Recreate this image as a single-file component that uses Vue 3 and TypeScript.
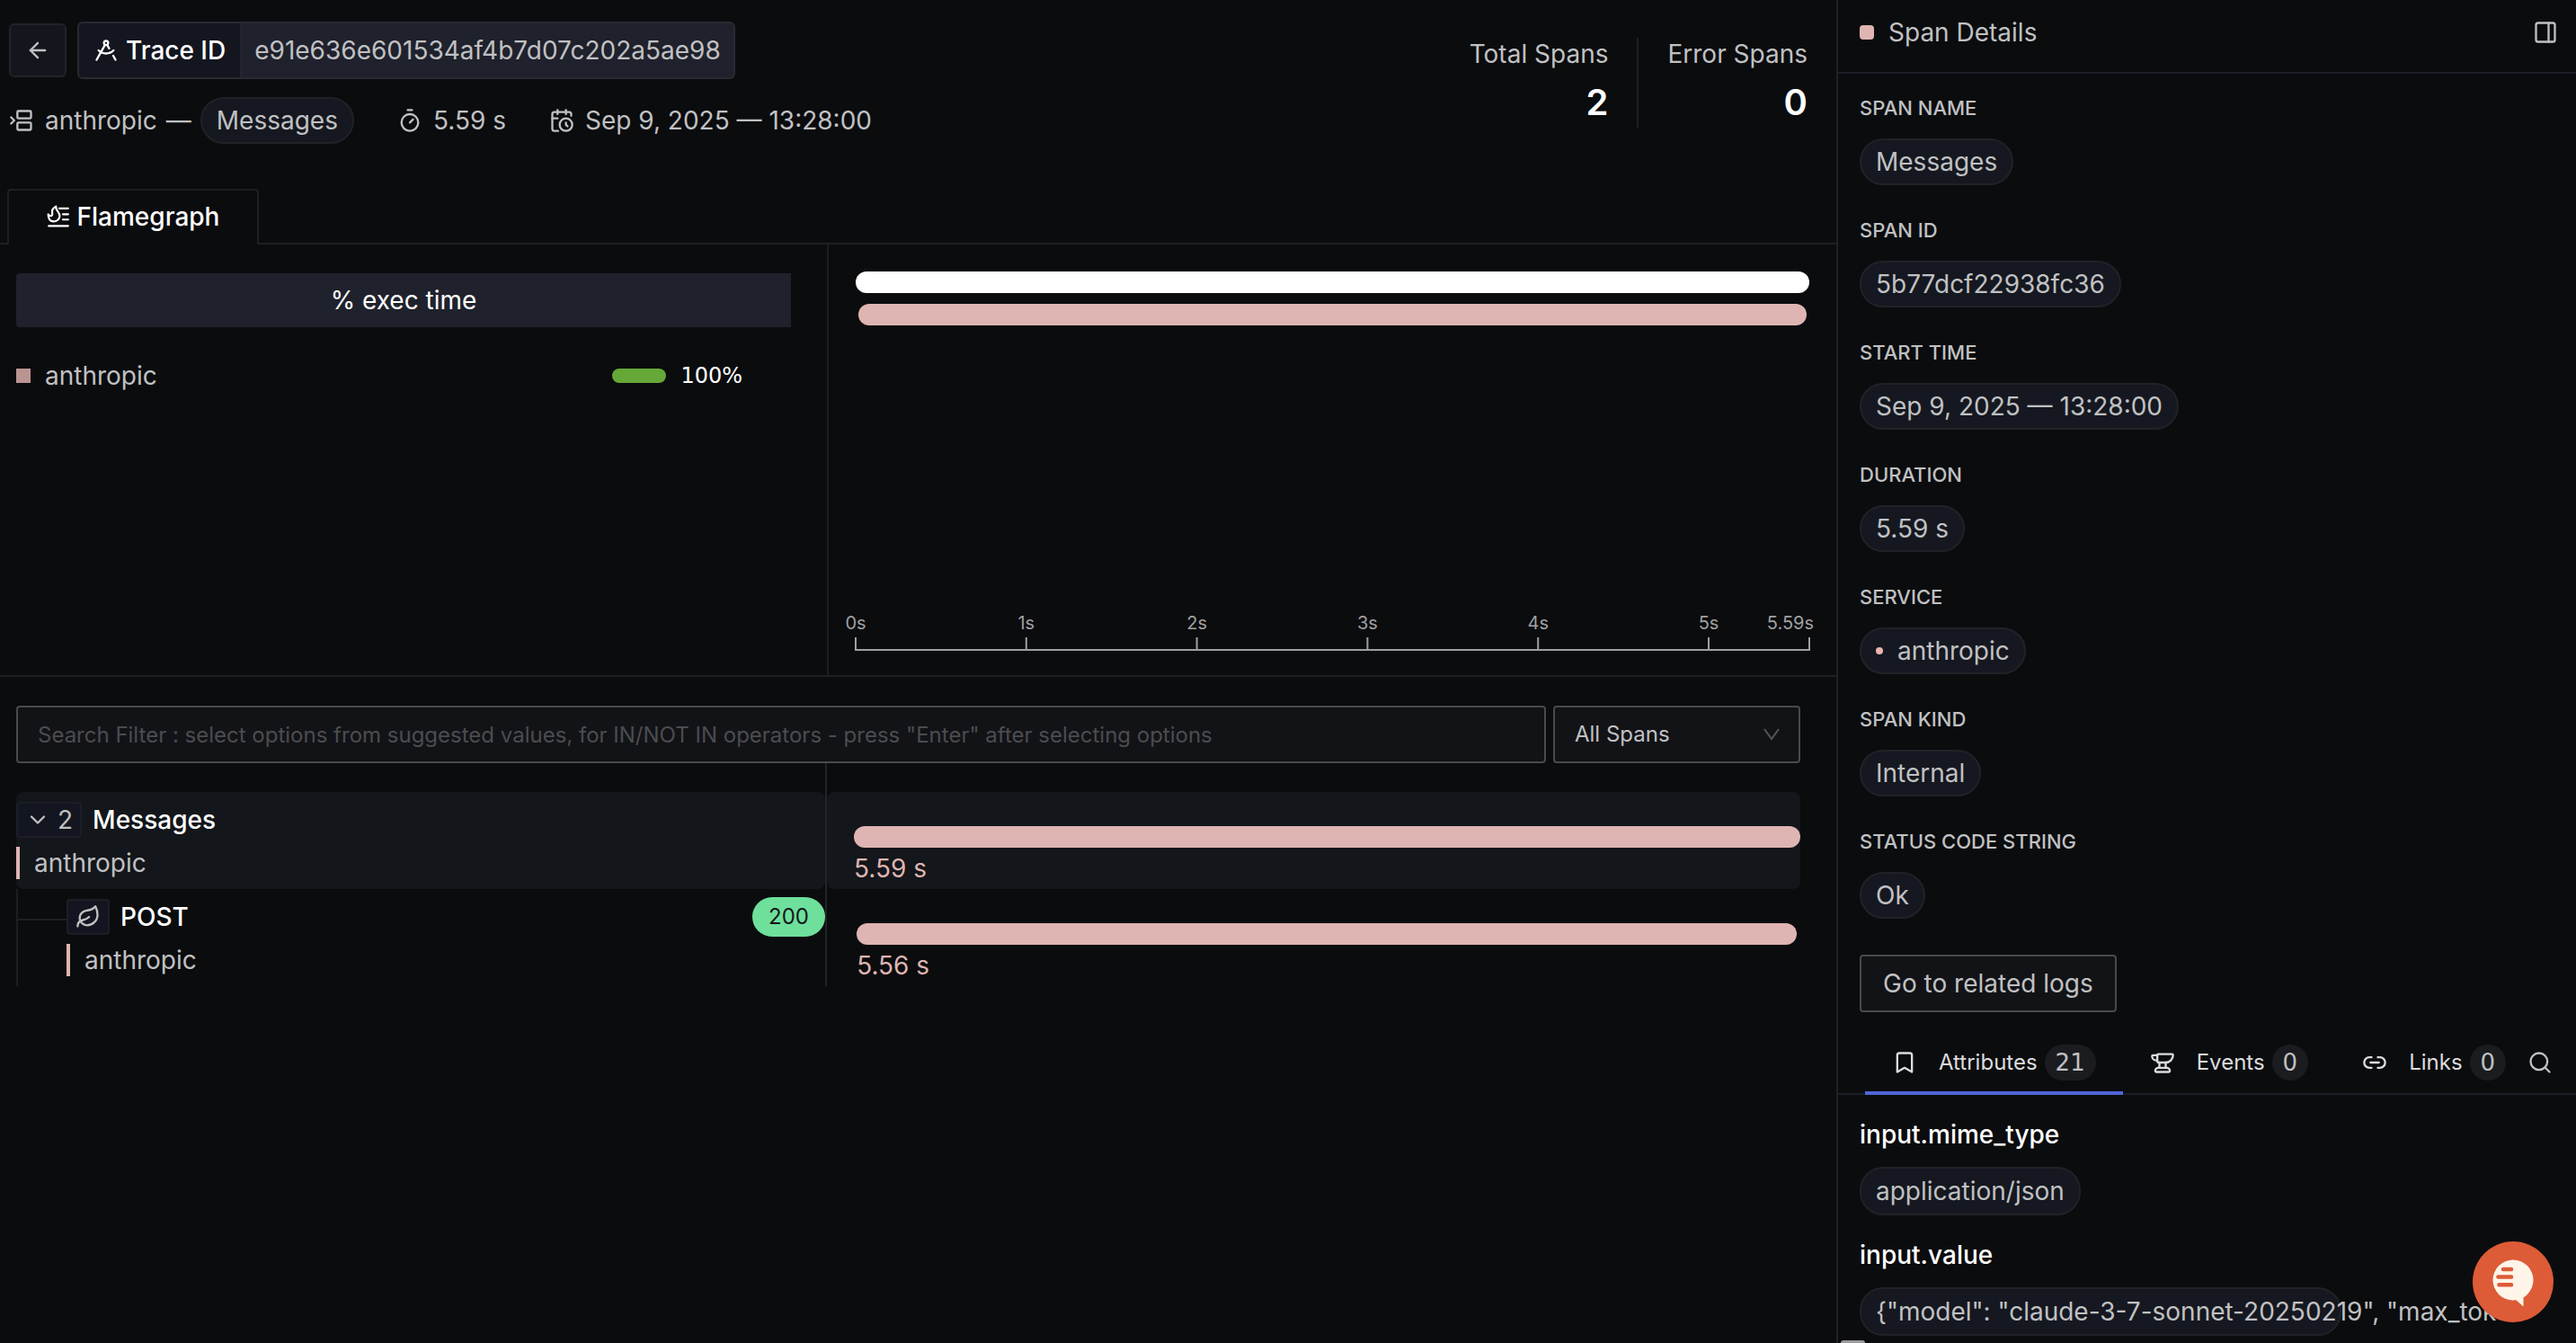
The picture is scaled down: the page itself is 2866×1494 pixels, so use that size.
<script setup lang="ts">
import { h, type FunctionalComponent } from 'vue'

interface Detail {
  label: string
  value: string
  dot?: boolean
}

interface Span {
  name: string
  service: string
  duration: string
  offset: number
  width: number
  children?: number
  status?: number
}

const TOTAL = 5.59
const STARTED = 'Sep 9, 2025 — 13:28:00'

const details: Detail[] = [
  { label: 'SPAN NAME', value: 'Messages' },
  { label: 'SPAN ID', value: '5b77dcf22938fc36' },
  { label: 'START TIME', value: STARTED },
  { label: 'DURATION', value: '5.59 s' },
  { label: 'SERVICE', value: 'anthropic', dot: true },
  { label: 'SPAN KIND', value: 'Internal' },
  { label: 'STATUS CODE STRING', value: 'Ok' },
]

const attributes = [
  { key: 'input.mime_type', value: 'application/json' },
  { key: 'input.value', value: '{"model": "claude-3-7-sonnet-20250219", "max_token' },
]

const spans: Span[] = [
  { name: 'Messages', service: 'anthropic', duration: '5.59 s', offset: 0, width: 100, children: 2 },
  { name: 'POST', service: 'anthropic', duration: '5.56 s', offset: 0.3, width: 99.3, status: 200 },
]

const ticks = [0, 1, 2, 3, 4, 5].map((s) => ({ label: `${s}s`, x: `${(s / TOTAL) * 100}%` }))

const tabs = [
  { name: 'Attributes', count: 21, icon: 'bookmark' },
  { name: 'Events', count: 0, icon: 'anvil' },
  { name: 'Links', count: 0, icon: 'link' },
]

const shapes: Record<string, string[]> = {
  back: ['m12 19-7-7 7-7', 'M19 12H5'],
  compass: [
    'm12.99 6.74 1.93 3.44',
    'M19.136 12a10 10 0 0 1-14.271 0',
    'm21 21-2.16-3.84',
    'm3 21 8.02-14.26',
    'M10 5a2 2 0 1 0 4 0a2 2 0 1 0-4 0',
  ],
  between: [
    'M9 3h11a1 1 0 0 1 1 1v5a1 1 0 0 1-1 1H9a1 1 0 0 1-1-1V4a1 1 0 0 1 1-1z',
    'm2 9 3 3-3 3',
    'M9 14h11a1 1 0 0 1 1 1v5a1 1 0 0 1-1 1H9a1 1 0 0 1-1-1v-5a1 1 0 0 1 1-1z',
  ],
  timer: ['M10 2h4', 'M12 14l3-3', 'M4 14a8 8 0 1 0 16 0a8 8 0 1 0-16 0'],
  calendar: [
    'M21 7.5V6a2 2 0 0 0-2-2H5a2 2 0 0 0-2 2v14a2 2 0 0 0 2 2h3.5',
    'M16 2v4',
    'M8 2v4',
    'M3 10h5',
    'M17.5 17.5 16 16.3V14',
    'M10 16a6 6 0 1 0 12 0a6 6 0 1 0-12 0',
  ],
  flame: [
    'M13 3.5h9',
    'M16.5 9.5H22',
    'M16.5 15H22',
    'M2 21.5h20',
    'M1.5 9.5c0 5 2.5 7.5 5.8 7.5 3.5 0 6-2.6 6-5.8 0-4-4.3-5.2-3.8-9.7-3 1.5-4.5 4-3.8 7.2.3 1.5-.4 2.5-1.5 2.5-1.2 0-2-.7-2.7-1.7z',
  ],
  panel: ['M5 3h14a2 2 0 0 1 2 2v14a2 2 0 0 1-2 2H5a2 2 0 0 1-2-2V5a2 2 0 0 1 2-2z', 'M15 3v18'],
  chevron: ['m6 9 6 6 6-6'],
  leaf: [
    'M11 20A7 7 0 0 1 9.8 6.1C15.5 5 17 4.48 19 2c1 2 2 4.18 2 8 0 5.5-4.78 10-10 10Z',
    'M2 21c0-3 1.85-5.36 5.08-6C9.5 14.52 12 13 13 12',
  ],
  bookmark: ['m19 21-7-4-7 4V5a2 2 0 0 1 2-2h10a2 2 0 0 1 2 2v16z'],
  anvil: [
    'M7 10H6a4 4 0 0 1-4-4 1 1 0 0 1 1-1h4',
    'M7 5a1 1 0 0 1 1-1h13a1 1 0 0 1 1 1 7 7 0 0 1-7 7H8a1 1 0 0 1-1-1z',
    'M9 12v5',
    'M15 12v5',
    'M5 20a3 3 0 0 1 3-3h8a3 3 0 0 1 3 3 1 1 0 0 1-1 1H6a1 1 0 0 1-1-1',
  ],
  link: ['M9 17H7A5 5 0 0 1 7 7h2', 'M15 7h2a5 5 0 1 1 0 10h-2', 'M8 12h8'],
  search: ['M3 11a8 8 0 1 0 16 0a8 8 0 1 0-16 0', 'm21 21-4.3-4.3'],
}

const Icon: FunctionalComponent<{ name: string; size?: number }> = (props) =>
  h(
    'svg',
    {
      width: props.size ?? 28,
      height: props.size ?? 28,
      viewBox: '0 0 24 24',
      fill: 'none',
      stroke: 'currentColor',
      'stroke-width': 2,
      'stroke-linecap': 'round',
      'stroke-linejoin': 'round',
      'aria-hidden': 'true',
      style: { flex: 'none', display: 'block' },
    },
    shapes[props.name].map((d) => h('path', { d })),
  )
Icon.props = ['name', 'size']
</script>

<template>
  <div class="page">
    <main class="main">
      <header class="header">
        <div class="trace">
          <div class="trace-row">
            <button class="back" type="button" aria-label="Back"><Icon name="back" /></button>
            <div class="trace-id">
              <span class="trace-key"><Icon name="compass" />Trace ID</span>
              <span class="trace-value">e91e636e601534af4b7d07c202a5ae98</span>
            </div>
          </div>
          <div class="meta">
            <span class="meta-item"><Icon name="between" />
              <span class="service"><span>anthropic</span><span>—</span><span class="pill">Messages</span></span>
            </span>
            <span class="meta-item"><Icon name="timer" />5.59 s</span>
            <span class="meta-item"><Icon name="calendar" />{{ STARTED }}</span>
          </div>
        </div>
        <div class="stats">
          <div class="stat"><span>Total Spans</span><strong>2</strong></div>
          <div class="stat"><span>Error Spans</span><strong>0</strong></div>
        </div>
      </header>

      <nav class="views">
        <button class="view" type="button"><Icon name="flame" :size="26" />Flamegraph</button>
      </nav>

      <section class="flame">
        <div class="legend">
          <div class="legend-head">% exec time</div>
          <div class="legend-row">
            <i class="swatch"></i>
            <span class="legend-name">anthropic</span>
            <i class="meter"></i>
            <span class="percent">100%</span>
          </div>
        </div>
        <div class="chart">
          <div class="bars">
            <div class="bar root"></div>
            <div class="bar" :style="{ marginLeft: '0.3%', width: '99.4%' }"></div>
          </div>
          <svg class="axis" width="100%" height="44">
            <line x1="0" x2="100%" y1="41" y2="41" />
            <g v-for="t in ticks" :key="t.label">
              <line :x1="t.x" :x2="t.x" y1="27" y2="42" />
              <text :x="t.x" y="18" text-anchor="middle">{{ t.label }}</text>
            </g>
            <line x1="100%" x2="100%" y1="27" y2="42" />
            <text x="100%" dx="5" y="18" text-anchor="end">5.59s</text>
          </svg>
        </div>
      </section>

      <section class="waterfall">
        <div class="filters">
          <input
            class="filter"
            type="text"
            aria-label="Search filter"
            placeholder='Search Filter : select options from suggested values, for IN/NOT IN operators - press "Enter" after selecting options'
          />
          <div class="select">
            <select aria-label="Span filter"><option>All Spans</option></select>
            <svg width="20" height="20" viewBox="0 0 20 20" fill="none" stroke="currentColor" stroke-width="2">
              <path d="M2 4l8 11 8-11" />
            </svg>
          </div>
        </div>
        <div class="rows">
          <div class="gap"></div>
          <div v-for="s in spans" :key="s.name" class="row" :class="{ active: s.children, child: !s.children }">
            <div class="cell">
              <i v-if="!s.children" class="elbow"></i>
              <div class="span-info">
                <div class="span-title">
                  <button v-if="s.children" class="toggle" type="button">
                    <Icon name="chevron" />{{ s.children }}
                  </button>
                  <span v-else class="toggle leaf"><Icon name="leaf" /></span>
                  <span class="span-name">{{ s.name }}</span>
                  <span v-if="s.status" class="status">{{ s.status }}</span>
                </div>
                <div class="span-service">{{ s.service }}</div>
              </div>
            </div>
            <div class="track">
              <div class="timing" :style="{ marginLeft: s.offset + '%', width: s.width + '%' }">
                <div class="bar"></div>
                <span>{{ s.duration }}</span>
              </div>
            </div>
          </div>
        </div>
      </section>
    </main>

    <aside class="panel">
      <header class="panel-head">
        <i class="marker"></i>
        <h2>Span Details</h2>
        <button class="plain" type="button" aria-label="Dock panel"><Icon name="panel" /></button>
      </header>
      <dl class="details">
        <div v-for="d in details" :key="d.label" class="detail">
          <dt>{{ d.label }}</dt>
          <dd class="pill"><i v-if="d.dot" class="dot"></i>{{ d.value }}</dd>
        </div>
      </dl>
      <button class="logs" type="button">Go to related logs</button>
      <div class="tabs">
        <button v-for="(t, i) in tabs" :key="t.name" class="tab" :class="{ on: i === 0 }" type="button">
          <Icon :name="t.icon" /><span>{{ t.name }}</span><b>{{ t.count }}</b>
        </button>
        <button class="plain find" type="button" aria-label="Search attributes"><Icon name="search" /></button>
      </div>
      <dl class="attributes">
        <div v-for="a in attributes" :key="a.key" class="attribute">
          <dt>{{ a.key }}</dt>
          <dd class="pill">{{ a.value }}</dd>
        </div>
      </dl>
      <i class="thumb"></i>
    </aside>

    <button class="chat" type="button" aria-label="Open chat">
      <svg width="90" height="90" viewBox="0 0 90 90" aria-hidden="true">
        <circle cx="45" cy="45" r="45" fill="#dd5b37" />
        <path d="M45 20.5a22.5 22.5 0 1 1 0 45 22.5 22.5 0 0 1 0-45z" fill="#fff4e8" />
        <path d="M47 64l9.5 8.5V58z" fill="#fff4e8" />
        <path d="M34 31h9M28.5 39.5h14.5M29.5 48.3h13.5" stroke="#dd5b37" stroke-width="4.6" stroke-linecap="round" />
      </svg>
    </button>
  </div>
</template>

<style>
body {
  margin: 0;
  background: #0b0c0e;
}
</style>

<style scoped>
* {
  box-sizing: border-box;
}

.page {
  display: flex;
  height: 100vh;
  overflow: hidden;
  position: relative;
  background: #0b0c0e;
  color: #c0c1c3;
  font: 400 28px/36px Inter, "Liberation Sans", sans-serif;
}

button,
input,
select {
  margin: 0;
  font: inherit;
  color: inherit;
}

button {
  display: flex;
  align-items: center;
  padding: 0;
  border: 0;
  background: none;
}

.main {
  flex: 1;
  min-width: 0;
}

.header {
  display: flex;
  justify-content: space-between;
  padding: 24px 32px 0 10px;
  height: 210px;
}

.trace-row {
  display: flex;
  align-items: center;
  gap: 12px;
}

.back {
  width: 64px;
  height: 60px;
  justify-content: center;
  border: 2px solid #212328;
  border-radius: 6px;
  background: #13161d;
}

.trace-id {
  display: flex;
  height: 64px;
  border: 2px solid #292b33;
  border-radius: 6px;
  background: #1f212c;
  overflow: hidden;
}

.trace-key,
.trace-value {
  display: flex;
  align-items: center;
}

.trace-key {
  gap: 8px;
  padding: 0 16px;
  border-right: 2px solid #24262e;
  background: #13161f;
  color: #fff;
  font-weight: 500;
}

.trace-value {
  padding: 0 14px;
}

.meta {
  display: flex;
  align-items: center;
  gap: 48px;
  margin-top: 20px;
}

.meta-item,
.service {
  display: flex;
  align-items: center;
}

.meta-item {
  gap: 12px;
}

.service {
  gap: 10px;
}

.pill {
  display: flex;
  align-items: center;
  width: fit-content;
  height: 52px;
  margin: 0;
  padding: 0 16px;
  border: 2px solid #202227;
  border-radius: 26px;
  background: #151820;
  white-space: nowrap;
}

.stats {
  display: flex;
  align-items: flex-start;
  padding-top: 18px;
}

.stat {
  display: flex;
  flex-direction: column;
  align-items: flex-end;
  gap: 12px;
  height: 100px;
}

.stat + .stat {
  margin-left: 32px;
  padding-left: 32px;
  border-left: 2px solid #1d1f24;
}

.stat strong {
  color: #fff;
  font-size: 40px;
  line-height: 48px;
  font-weight: 600;
}

.views {
  display: flex;
  height: 62px;
  padding-left: 8px;
  border-bottom: 2px solid #1d1f24;
}

.view {
  gap: 8px;
  width: 280px;
  height: 62px;
  padding-bottom: 2px;
  justify-content: center;
  border: 2px solid #1d1f24;
  border-bottom: 0;
  border-radius: 4px 4px 0 0;
  background: #0b0c0e;
  color: #fff;
  font-weight: 500;
}

.flame {
  display: flex;
  height: 481px;
  border-bottom: 2px solid #1d1f24;
}

.legend {
  width: 922px;
  padding: 32px 40px 0 18px;
  border-right: 2px solid #1a1d27;
}

.legend-head {
  height: 60px;
  border-radius: 4px 0 0 4px;
  background: #1f222c;
  color: #fff;
  line-height: 60px;
  text-align: center;
}

.legend-row {
  display: flex;
  align-items: center;
  height: 36px;
  margin-top: 36px;
  padding-right: 54px;
}

.swatch {
  width: 16px;
  height: 16px;
  margin-right: 16px;
  background: #ba9592;
}

.legend-name {
  flex: 1;
}

.meter {
  width: 60px;
  height: 16px;
  margin-right: 16px;
  border-radius: 8px;
  background: #65a838;
}

.percent {
  color: #fff;
  font-family: "DejaVu Sans", sans-serif;
  font-size: 24px;
}

.chart {
  display: flex;
  flex: 1;
  flex-direction: column;
  justify-content: space-between;
  padding: 30px 30px 25px;
}

.bars {
  display: grid;
  gap: 12px;
}

.bar {
  height: 24px;
  border-radius: 12px;
  background: #deb5b2;
}

.bar.root {
  background: #fff;
}

.axis {
  display: block;
  overflow: visible;
}

.axis line {
  stroke: #9fa0a2;
  stroke-width: 2;
}

.axis text {
  fill: #9fa0a2;
  font-size: 20px;
}

.waterfall {
  padding: 32px 40px 0 18px;
}

.filters {
  display: flex;
  gap: 8px;
  font-size: 24px;
}

.filter,
.select {
  height: 64px;
  border: 2px solid #494a4d;
  border-radius: 4px;
  background: #121317;
}

.filter {
  flex: 1;
  padding: 0 22px;
}

.filter::placeholder {
  color: #4b4c50;
  opacity: 1;
}

.select {
  display: flex;
  align-items: center;
  width: 275px;
  padding-right: 20px;
}

.select svg {
  flex: none;
  color: #55565a;
}

.select select {
  flex: 1;
  height: 100%;
  padding: 0 22px;
  border: 0;
  background: none;
  appearance: none;
}

.rows {
  background: linear-gradient(#222429, #222429) 900px 0 / 2px 100% no-repeat;
}

.gap {
  height: 32px;
}

.row {
  display: grid;
  grid-template-columns: 900px minmax(0, 1fr);
  column-gap: 2px;
  height: 108px;
}

.cell,
.track {
  border-radius: 8px;
}

.active .cell,
.active .track {
  background: #13161a;
}

.cell {
  display: flex;
}

.child .cell {
  border-left: 2px solid #1d1f23;
  border-radius: 0;
}

.elbow {
  width: 54px;
  height: 35px;
  border-bottom: 2px solid #1d1f23;
}

.span-info {
  flex: 1;
  padding-top: 9px;
}

.span-title {
  display: flex;
  align-items: center;
  height: 44px;
  color: #fff;
}

.toggle {
  gap: 8px;
  height: 40px;
  padding: 0 8px;
  border: 2px solid #1b1e27;
  border-radius: 4px;
  background: #131620;
  color: #c0c1c3;
}

.leaf {
  display: flex;
  align-items: center;
}

.span-name {
  margin-left: 12px;
  font-weight: 500;
}

.status {
  height: 44px;
  margin-left: auto;
  padding: 0 18px;
  border-radius: 22px;
  background: #6ee09b;
  color: #13161c;
  font-size: 24px;
  line-height: 44px;
}

.span-service {
  margin-top: 8px;
  padding-left: 16px;
  border-left: 4px solid #deb5b2;
}

.track {
  padding: 38px 0 0 30px;
}

.timing {
  color: #deb5b2;
}

.timing span {
  display: block;
  margin-top: 5px;
}

.panel {
  position: relative;
  flex: 0 0 823px;
  overflow: hidden;
  border-left: 2px solid #1f2125;
}

.panel-head {
  display: flex;
  align-items: center;
  height: 82px;
  padding: 0 20px 8px 24px;
  border-bottom: 2px solid #1d1e28;
}

.marker {
  width: 16px;
  height: 16px;
  margin-right: 16px;
  border-radius: 4px;
  background: #deb5b2;
}

h2 {
  flex: 1;
  margin: 0;
  font: inherit;
}

.plain {
  flex: none;
}

.details {
  display: grid;
  gap: 32px;
  margin: 0;
  padding: 20px 24px 0;
}

dt {
  font-weight: 500;
}

.detail dt {
  margin-bottom: 16px;
  font-size: 22px;
}

.dot {
  width: 8px;
  height: 8px;
  margin-right: 16px;
  border-radius: 50%;
  background: #e9b5ae;
}

.logs {
  height: 64px;
  margin: 40px 24px 0;
  padding: 0 24px;
  border: 2px solid #494a4d;
  border-radius: 4px;
  background: #121317;
}

.tabs {
  display: flex;
  height: 76px;
  margin-top: 16px;
  padding: 0 26px 0 30px;
  border-bottom: 2px solid #1d1e28;
}

.tab {
  gap: 8px;
  height: 76px;
  padding: 8px 30px 0;
  border-bottom: 4px solid transparent;
  color: #dcdcde;
  font-size: 24px;
}

.tab:nth-child(3) {
  padding-right: 0;
}

.tab span {
  margin-left: 16px;
}

.tab.on {
  border-color: #4e66d8;
}

.tab b {
  height: 40px;
  padding: 0 12px;
  border-radius: 20px;
  background: #1b1c20;
  color: #c0c1c3;
  font: 400 26px/40px "DejaVu Sans", sans-serif;
}

.find {
  height: 80px;
  margin-left: auto;
}

.attributes {
  display: grid;
  gap: 26px;
  margin: 0;
  padding: 26px 24px 0;
}

.attribute dt {
  margin-bottom: 18px;
  color: #fff;
}

.attribute .pill {
  height: 54px;
  max-width: 536px;
}

.thumb {
  position: absolute;
  bottom: 0;
  left: 3px;
  width: 27px;
  height: 3px;
  border-radius: 3px 3px 0 0;
  background: #9b9b9d;
}

.chat {
  position: absolute;
  right: 25px;
  bottom: 23px;
}
</style>
